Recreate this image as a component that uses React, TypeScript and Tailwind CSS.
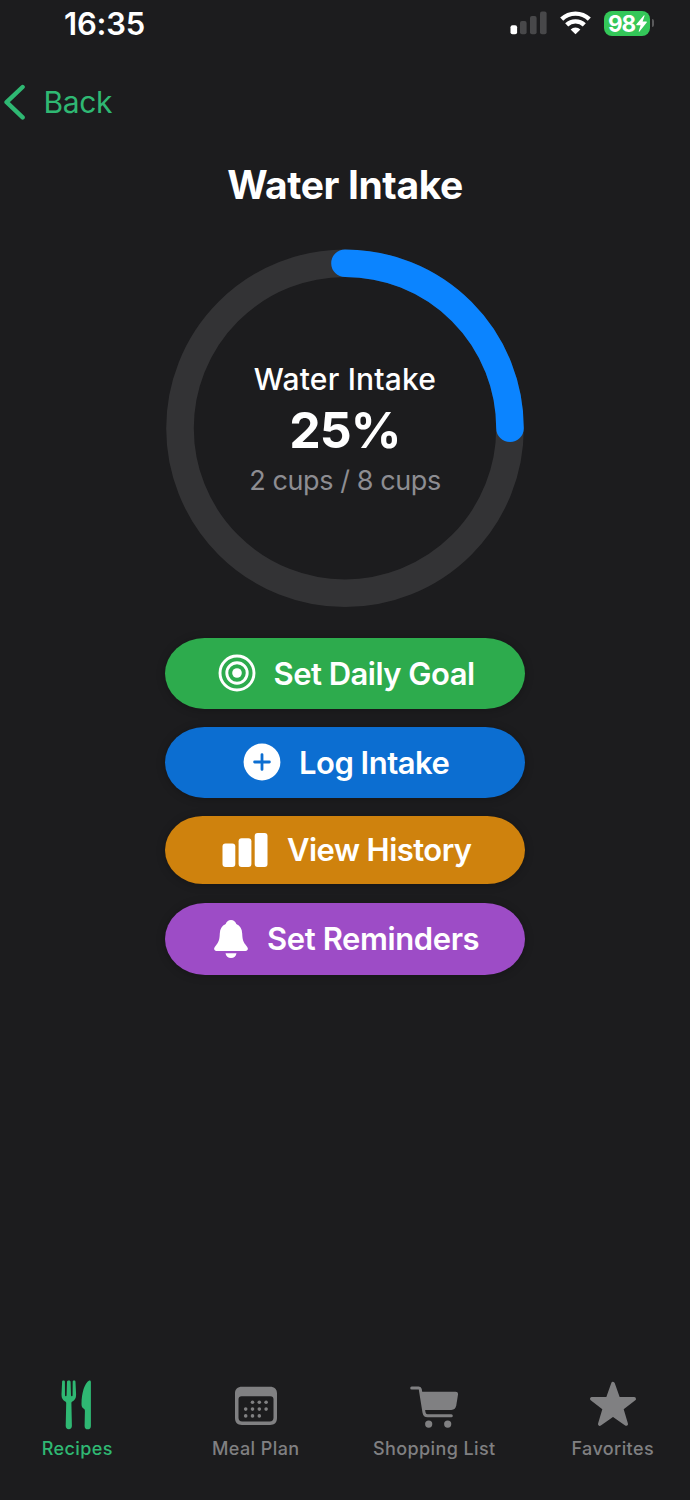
import React from 'react';

const TargetIcon = () => (
  <svg className="mb-[2px] h-[38px] w-[38px] shrink-0" viewBox="0 0 38 38" fill="none" stroke="currentColor">
    <circle cx="19" cy="19" r="17" strokeWidth="2.9" />
    <circle cx="19" cy="19" r="10.2" strokeWidth="2.9" />
    <circle cx="19" cy="19" r="4.8" fill="currentColor" stroke="none" />
  </svg>
);

const PlusIcon = () => (
  <svg className="mb-[2px] h-[38px] w-[38px] shrink-0" viewBox="0 0 38 38">
    <circle cx="19" cy="19" r="18.4" fill="currentColor" />
    <path d="M19 11.6v14.8M11.6 19h14.8" stroke="#0c6ed1" strokeWidth="2.8" strokeLinecap="round" />
  </svg>
);

const BarsIcon = () => (
  <svg className="h-[34px] w-[46px] shrink-0" viewBox="0 0 46 34" fill="currentColor">
    <rect x="0.5" y="10.5" width="12.8" height="23.5" rx="3" />
    <rect x="16.6" y="5.2" width="12.8" height="28.8" rx="3" />
    <rect x="32.7" y="0" width="12.8" height="34" rx="3" />
  </svg>
);

const BellIcon = () => (
  <svg className="h-[38px] w-[34px] shrink-0" viewBox="0 0 34 38" fill="currentColor">
    <path d="M17 0C14.3 0 12.3 1.7 11.7 4.1C7.8 5.8 6 9 5.8 13.4C5.6 18.6 5 21.3 2.8 24.2L.8 26.9C-.6 28.9.2 31 2.6 31H31.4C33.8 31 34.6 28.9 33.2 26.9L31.2 24.2C29 21.3 28.4 18.6 28.2 13.4C28 9 26.2 5.8 22.3 4.1C21.7 1.7 19.7 0 17 0Z" />
    <path d="M11.5 33.2H22.5C22.1 36 20 38 17 38C14 38 11.9 36 11.5 33.2Z" />
  </svg>
);

const RecipesIcon = () => (
  <svg className="h-[50px] w-[32px]" viewBox="0 0 32 50" fill="currentColor">
    <path d="M2.5.5C1.6.5 1.1 1 1.1 1.9L.5 14.5C.4 18.5 2.1 20.4 4.2 21.6C5 22 5.2 22.4 5.2 23.2L4.7 45.8C4.7 48 5.9 49.3 7.8 49.3C9.7 49.3 10.9 48 10.9 45.8L10.4 23.2C10.4 22.4 10.6 22 11.4 21.6C13.5 20.4 15.2 18.5 15.1 14.5L14.5 1.9C14.5 1 14 .5 13.1.5C12.2.5 11.7 1 11.7 1.9L11.6 15.2C11.6 15.9 11.3 16.3 10.8 16.3C10.3 16.3 10 15.9 10 15.2L9.6 1.8C9.5 1 8.7.5 7.8.5C6.9.5 6.1 1 6 1.8L5.6 15.2C5.6 15.9 5.3 16.3 4.8 16.3C4.3 16.3 4 15.9 4 15.2L3.9 1.9C3.9 1 3.4.5 2.5.5Z" />
    <path d="M28.2.5C23.5 3 20.6 13 20.5 24C20.5 26.4 21.1 27.4 22.5 28.4C23.6 29.2 23.9 29.7 23.9 31L23.6 45.9C23.6 48 24.8 49.3 26.7 49.3C28.6 49.3 29.9 48 29.9 45.9V2C29.9.7 29.2.1 28.2.5Z" />
  </svg>
);

const CalendarIcon = () => (
  <svg className="mt-[3px] h-[40px] w-[42px]" viewBox="0 0 42 40" fill="currentColor">
    <path fillRule="evenodd" d="M7 .7H35C39.5.7 42 3 42 7.4V32C42 36.5 39.5 38.9 35 38.9H7C2.5 38.9 0 36.5 0 32V7.4C0 3 2.5.7 7 .7ZM6.6 10.2C4.6 10.2 3.5 11.3 3.5 13.2V31.7C3.5 34.1 4.8 35.4 7.2 35.4H34.8C37.2 35.4 38.5 34.1 38.5 31.7V13.2C38.5 11.3 37.4 10.2 35.4 10.2Z" />
    {[17.5, 24.3, 31.1].map((x) => <circle key={x} cx={x} cy="16.3" r="1.8" />)}
    {[10.7, 17.5, 24.3, 31.1].map((x) => <circle key={x} cx={x} cy="23.1" r="1.8" />)}
    {[10.7, 17.5, 24.3].map((x) => <circle key={x} cx={x} cy="29.9" r="1.8" />)}
  </svg>
);

const CartIcon = () => (
  <svg className="mt-[5px] h-[42px] w-[48px]" viewBox="0 0 48 42" fill="none">
    <path d="M1.7 2H8.8C9.8 2 10.1 2.4 10.3 3.4L14 26.5C14.4 28.9 15.1 29.8 17.5 29.8H41.3" stroke="currentColor" strokeWidth="3" strokeLinecap="round" />
    <path d="M10.8 5.8H45.6C47.3 5.8 48.2 6.9 48 8.4L46.3 19.3C45.8 22.3 44.2 23.9 41.3 23.9H13.6Z" fill="currentColor" />
    <circle cx="18.7" cy="38.1" r="3.6" fill="currentColor" />
    <circle cx="37.7" cy="38.1" r="3.6" fill="currentColor" />
  </svg>
);

const StarIcon = () => (
  <svg className="mb-px h-[46px] w-[48px]" viewBox="0 0 48 46" fill="currentColor" stroke="currentColor" strokeWidth="3.6" strokeLinejoin="round">
    <path d="M24 2.6L29.4 17.9H45.2L32.6 27.5L37.2 43L24 33.8L10.8 43L15.4 27.5L2.8 17.9H18.6Z" />
  </svg>
);

const actions = [
  { label: 'Set Daily Goal', icon: <TargetIcon />, className: 'h-[71px] bg-[#2dab4d] pl-[52.5px] gap-[18px] mb-[18px]', text: 'tracking-[-0.52px]' },
  { label: 'Log Intake', icon: <PlusIcon />, className: 'h-[71px] bg-[#0c6ed1] pl-[78px] gap-[18px] mb-[18px]', text: 'tracking-[-0.5px]' },
  { label: 'View History', icon: <BarsIcon />, className: 'h-[68px] bg-[#cf820d] pl-[57px] gap-[19px] mb-[19px]', text: 'tracking-[-0.55px]' },
  { label: 'Set Reminders', icon: <BellIcon />, className: 'h-[72px] bg-[#9d4cc6] pl-[49px] gap-[19px]', text: 'tracking-[-0.4px]' },
];

const tabs = [
  { label: 'Recipes', icon: <RecipesIcon />, className: 'text-[#2fb873]' },
  { label: 'Meal Plan', icon: <CalendarIcon />, className: 'text-[#808082]' },
  { label: 'Shopping List', icon: <CartIcon />, className: 'text-[#808082]' },
  { label: 'Favorites', icon: <StarIcon />, className: 'text-[#808082]' },
];

const StatusBar = () => (
  <div className="flex h-[46px] items-center justify-between pl-[64px] pr-[36px]">
    <span className="pt-px text-[31px] leading-[46px] font-semibold tracking-[-0.2px]">16:35</span>
    <div className="flex items-center">
      <svg className="mr-[13px] h-[24px] w-[37px]" viewBox="0 0 37 24" fill="#48484a">
        <rect x="0.5" y="14.2" width="6.6" height="9" rx="2" fill="#fff" />
        <rect x="10" y="10" width="6.6" height="13.2" rx="2" />
        <rect x="20" y="5" width="6.6" height="18.2" rx="2" />
        <rect x="30" y="0.5" width="6.6" height="22.7" rx="2" />
      </svg>
      <svg className="mr-[13px] h-[24px] w-[31px]" viewBox="0 0 31 24" fill="none" stroke="#fff" strokeWidth="4.4">
        <path d="M1.7 8.1A20 20 0 0 1 29.3 8.1" />
        <path d="M6.7 13.9A12.7 12.7 0 0 1 24.3 13.9" />
        <path d="M15.5 23.2L10.6 18.6A7 7 0 0 1 20.4 18.6Z" fill="#fff" stroke="none" />
      </svg>
      <div className="flex h-[25px] w-[46px] items-center rounded-[8px] bg-[#34c759] pl-[4px]">
        <span className="text-[22.5px] leading-[25px] font-bold tracking-[-1px]">98</span>
        <svg className="ml-px h-[17px] w-[11px]" viewBox="0 0 11 17" fill="#fff">
          <path d="M7.8.4L.4 9.2C0 9.7.2 10.2.8 10.2H4.6L2.8 16.1C2.6 16.8 3.1 17 3.5 16.5L10.7 7.6C11.1 7.1 10.9 6.6 10.3 6.6H6.6L8.5.9C8.7.2 8.2-.1 7.8.4Z" />
        </svg>
      </div>
      <div className="ml-[2px] h-[8px] w-[2px] rounded-r-full bg-[#5a5a5c]" />
    </div>
  </div>
);

const ProgressRing = () => (
  <div className="relative h-[359px] w-[358px]">
    <svg className="h-full w-full" viewBox="0 0 358 359" fill="none" strokeWidth="27.6">
      <circle cx="179" cy="179.2" r="165" stroke="#333335" />
      <path d="M179 14.2A165 165 0 0 1 344 179.2" stroke="#0b84ff" strokeLinecap="round" />
    </svg>
    <div className="absolute inset-0 flex flex-col items-center pt-[109px] whitespace-nowrap">
      <span className="text-[30px] leading-[42px] font-medium tracking-[0.2px]">Water Intake</span>
      <span className="text-[50px] leading-[60px] font-bold tracking-[-0.9px]">25%</span>
      <span className="text-[27px] leading-[42px] tracking-[-0.4px] text-[#8d8d92]">2 cups / 8 cups</span>
    </div>
  </div>
);

export default function App() {
  return (
    <div className="flex h-[1500px] w-[690px] flex-col overflow-hidden bg-[#1c1c1e] font-['Inter',sans-serif] text-white">
      <StatusBar />
      <button className="mt-[36px] flex h-[40px] items-center self-start pl-[4px] text-[#2fb873]">
        <svg className="h-[36px] w-[22px]" viewBox="0 0 22 36" fill="none" stroke="currentColor" strokeWidth="4.4" strokeLinecap="round" strokeLinejoin="round">
          <path d="M18.6 3L2.6 18.2L18.6 33.4" />
        </svg>
        <span className="ml-[17.5px] text-[30px] leading-[40px] tracking-[-0.4px]">Back</span>
      </button>

      <main className="flex flex-1 flex-col items-center">
        <h1 className="mt-[38px] mb-[39px] text-[39px] leading-[50px] font-bold tracking-[-0.4px]">Water Intake</h1>
        <ProgressRing />
        <div className="mt-[30px] w-[360px]">
          {actions.map((a) => (
            <button
              key={a.label}
              className={`flex w-full items-center rounded-[40px_/_36px] whitespace-nowrap shadow-[0_1px_8px_rgba(0,0,0,0.25)] ${a.className}`}
            >
              {a.icon}
              <span className={`text-[31px] leading-[40px] font-semibold ${a.text}`}>{a.label}</span>
            </button>
          ))}
        </div>
      </main>

      <nav className="-mx-3 grid h-[125px] grid-cols-4">
        {tabs.map((t) => (
          <div key={t.label} className={`flex flex-col items-center ${t.className}`}>
            <div className="flex h-[59px] items-center">{t.icon}</div>
            <span className="mt-[3px] text-[18px] leading-[24px] font-medium tracking-[0.4px]">{t.label}</span>
          </div>
        ))}
      </nav>
    </div>
  );
}
